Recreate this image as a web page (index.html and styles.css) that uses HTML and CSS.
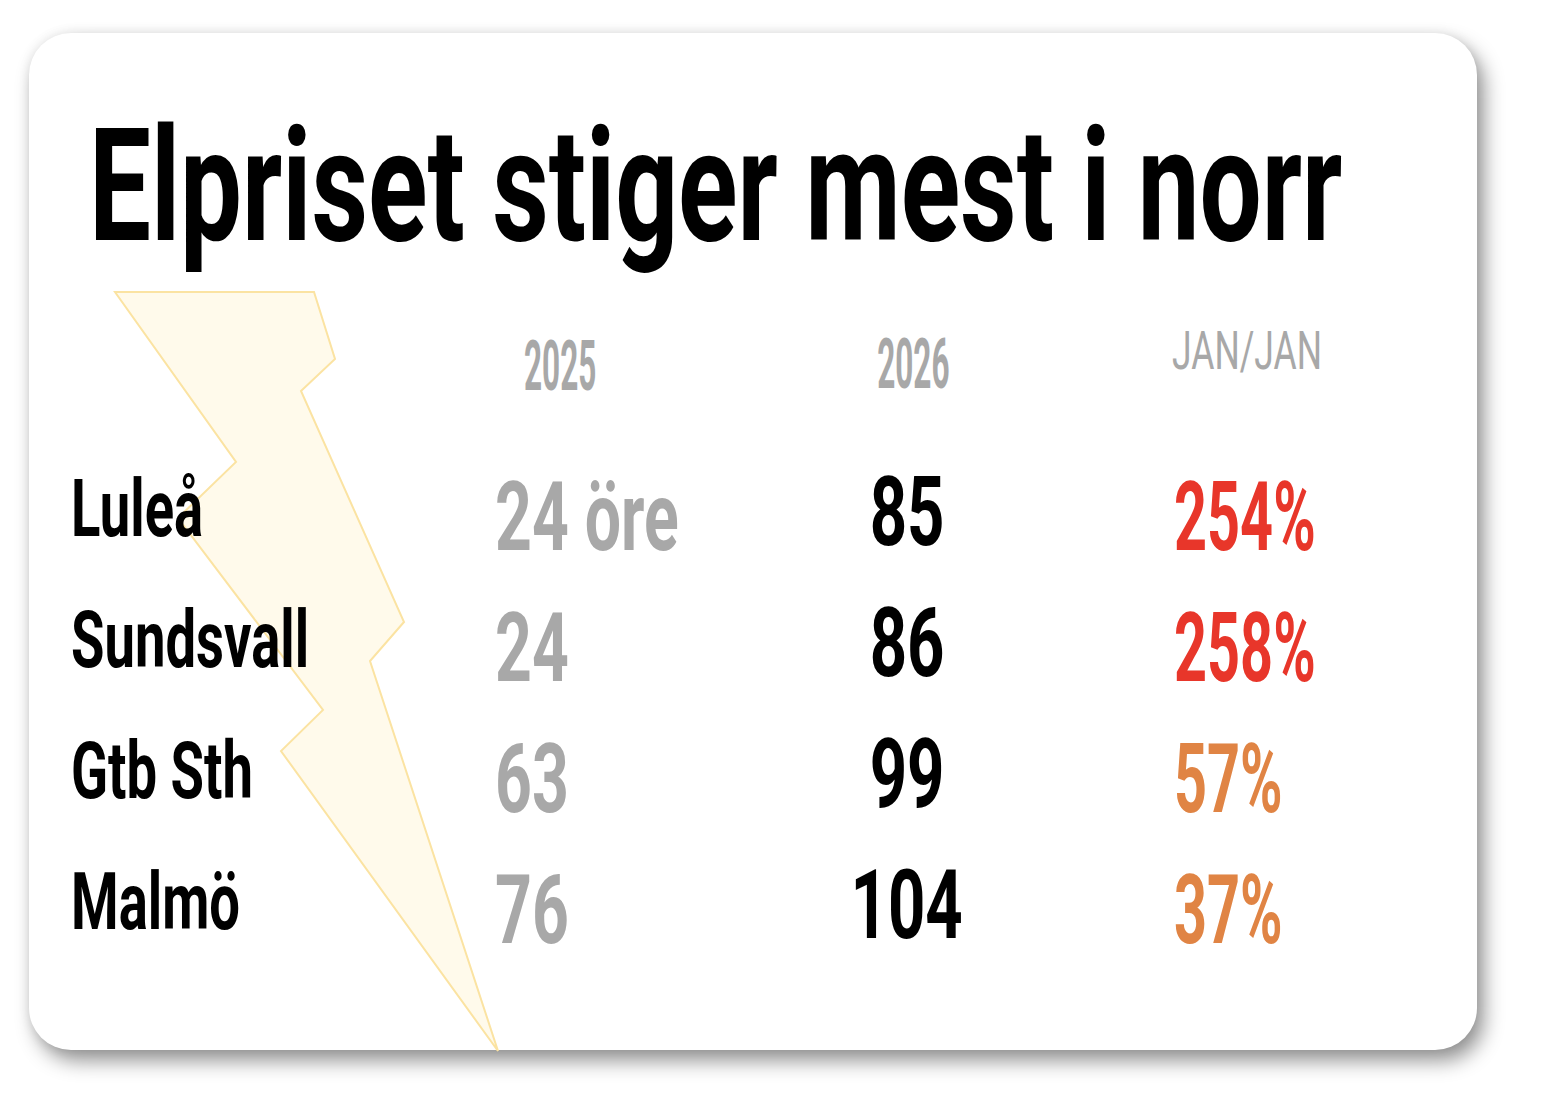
FILE: index.html
```html
<!DOCTYPE html>
<html lang="sv">
<head>
<meta charset="utf-8">
<title>Elpriset stiger mest i norr</title>
<link rel="stylesheet" href="styles.css">
</head>
<body>
<div class="card">
  <svg class="bolt" width="480" height="1017" viewBox="0 0 480 1017" aria-hidden="true">
    <polygon points="86,259 285,259 306,326 272,358 375,589 341,628 469,1018 252,718 294,677 149,485 207,429" />
  </svg>
  <h1 class="title">Elpriset stiger mest i norr</h1>
  <div class="table">
    <div class="cell hdr h2025">2025</div>
    <div class="cell hdr h2026">2026</div>
    <div class="cell hdr hjan">JAN/JAN</div>

    <div class="cell label">Luleå</div>
    <div class="cell v1">24 öre</div>
    <div class="cell v2">85</div>
    <div class="cell v3 red">254%</div>

    <div class="cell label">Sundsvall</div>
    <div class="cell v1">24</div>
    <div class="cell v2">86</div>
    <div class="cell v3 red">258%</div>

    <div class="cell label">Gtb Sth</div>
    <div class="cell v1">63</div>
    <div class="cell v2">99</div>
    <div class="cell v3 orange">57%</div>

    <div class="cell label">Malmö</div>
    <div class="cell v1">76</div>
    <div class="cell v2">104</div>
    <div class="cell v3 orange">37%</div>
  </div>
</div>
</body>
</html>
```

FILE: styles.css
```css
html, body {
  margin: 0;
  padding: 0;
  background: #ffffff;
}

body {
  font-family: Roboto, "Liberation Sans", sans-serif;
  min-height: 1098px;
  box-sizing: border-box;
  padding: 33px 0 48px 29px;
}

.card {
  position: relative;
  width: 1448px;
  height: 1017px;
  box-sizing: border-box;
  padding-top: 74px;
  background: #ffffff;
  border-radius: 42px;
  box-shadow: 7px 11px 20px rgba(0, 0, 0, 0.42), 0 0 12px rgba(0, 0, 0, 0.08);
}

.bolt {
  position: absolute;
  left: 0;
  top: 0;
  overflow: visible;
}

.bolt polygon {
  fill: #fffaeb;
  stroke: #fbe3a2;
  stroke-width: 2;
  stroke-linejoin: miter;
}

.title {
  position: relative;
  margin: 0 0 0 60px;
  width: max-content;
  white-space: nowrap;
  font-size: 158px;
  line-height: 1;
  font-weight: 700;
  color: #000000;
  transform: scaleX(0.697);
  transform-origin: left center;
}

.table {
  position: relative;
  display: grid;
  grid-template-columns: 424px 300px 224px 1fr;
  grid-template-rows: 144px repeat(4, 131px);
  align-items: start;
  margin-top: 60px;
  padding-left: 42px;
}

.cell {
  width: max-content;
  white-space: nowrap;
  line-height: 1;
  font-weight: 700;
  transform-origin: left center;
}

.hdr {
  font-size: 70px;
  color: #a8a8a8;
  transform: scaleX(0.45);
}

.h2025 {
  grid-column: 2;
  margin-left: 29px;
  margin-top: 6px;
}

.h2026 {
  grid-column: 3;
  justify-self: center;
  transform-origin: center center;
  margin-left: 12px;
  margin-top: 4px;
}

.hjan {
  grid-column: 4;
  font-size: 53px;
  font-weight: 400;
  margin-left: 153px;
  transform: scaleX(0.67);
}

.label {
  grid-column: 1;
  font-size: 80px;
  color: #000000;
  transform: scaleX(0.68);
}

.v1 {
  font-size: 96px;
  color: #a8a8a8;
  transform: scaleX(0.67);
}

.v2 {
  justify-self: center;
  font-size: 96px;
  color: #000000;
  transform: scaleX(0.68);
  transform-origin: center center;
  margin-top: -5px;
}

.v3 {
  font-size: 96px;
  margin-left: 155px;
  transform: scaleX(0.6);
}

.red {
  color: #e8362a;
}

.orange {
  color: #e08444;
}
```
